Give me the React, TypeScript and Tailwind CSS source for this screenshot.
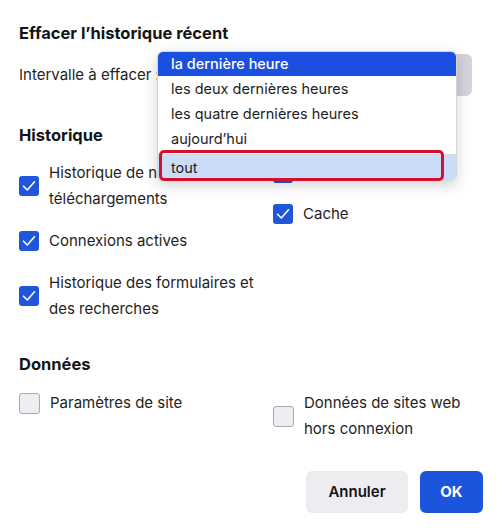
function Box(props: { checked?: boolean }) {
  if (props.checked) {
    return (
      <span className="flex h-[20px] w-[20px] shrink-0 items-center justify-center rounded-[3px] bg-[#1f56dc]">
        <svg width="16" height="16" viewBox="0 0 16 16" fill="none">
          <path d="M2.5 8.2 L6.3 12 L13.5 3.8" stroke="white" strokeWidth="1.6" strokeLinecap="round" strokeLinejoin="round" />
        </svg>
      </span>
    )
  }
  return <span className="h-[21px] w-[21px] shrink-0 rounded-[3px] border border-[#a9a9b0] bg-[#ededf2]" />
}

function Option(props: { lines: string[]; checked?: boolean }) {
  return (
    <div className="flex items-center gap-[10px]">
      <Box checked={props.checked} />
      <div className="leading-[26px]">
        {props.lines.map((l) => (
          <div key={l}>{l}</div>
        ))}
      </div>
    </div>
  )
}

export default function App() {
  const ranges = ["la dernière heure", "les deux dernières heures", "les quatre dernières heures", "aujourd’hui"]

  return (
    <div className="relative h-[531px] w-[500px] overflow-hidden bg-white px-[19px] font-['Inter',sans-serif] text-[15px] text-[#1e1e22]">
      <h1 className="pt-[23px] text-[16.5px] font-bold leading-[20px] text-[#141416]">Effacer l’historique récent</h1>

      <div className="mt-[11px] flex h-[42px] items-center">
        <span className="w-[138px] whitespace-nowrap">Intervalle à effacer :</span>
        <div className="h-[42px] w-[315px] rounded-[6px] bg-[#d3d3d9]" />
      </div>

      <h2 className="mt-[29px] text-[16.5px] font-bold leading-[20px] text-[#141416]">Historique</h2>

      <div className="mt-[15px] grid grid-cols-[254px_1fr]">
        <div className="flex flex-col gap-[16px]">
          <Option checked lines={["Historique de navigation et des", "téléchargements"]} />
          <Option checked lines={["Connexions actives"]} />
          <Option checked lines={["Historique des formulaires et", "des recherches"]} />
        </div>
        <div className="flex flex-col gap-[15px]">
          <Option checked lines={["Cookies"]} />
          <Option checked lines={["Cache"]} />
        </div>
      </div>

      <h2 className="mt-[32px] text-[16.5px] font-bold leading-[20px] text-[#141416]">Données</h2>

      <div className="mt-[16px] grid grid-cols-[254px_1fr]">
        <div className="flex items-start">
          <Option lines={["Paramètres de site"]} />
        </div>
        <Option lines={["Données de sites web", "hors connexion"]} />
      </div>

      <div className="mt-[29px] flex justify-end gap-[12px]">
        <button className="h-[42px] w-[102px] rounded-[6px] bg-[#ededf1] font-semibold text-[#141416]">Annuler</button>
        <button className="mr-[-2px] h-[42px] w-[63px] rounded-[6px] bg-[#1a55dc] font-bold text-white">OK</button>
      </div>

      <div className="absolute left-[157px] top-[51px] w-[300px] rounded-[6px] border border-[#d5d5da] bg-white text-[14.5px] shadow-[0_4px_14px_rgba(0,0,0,0.18)]">
        {ranges.map((r, i) => (
          <div
            key={r}
            className={
              i === 0
                ? "h-[24px] rounded-t-[5px] bg-[#1a4fe0] px-[13px] font-medium leading-[24px] text-white"
                : "h-[25px] px-[13px] leading-[25px]"
            }
          >
            {r}
          </div>
        ))}
        <div className="mt-[3px] h-[26px] rounded-b-[5px] border-t border-[#d8d8de] bg-[#cadcf6] px-[13px] leading-[26px]">tout</div>
      </div>
      <div className="absolute left-[159px] top-[150px] h-[31px] w-[285px] rounded-[5px] border-[3px] border-[#d3112f]" />
    </div>
  )
}
